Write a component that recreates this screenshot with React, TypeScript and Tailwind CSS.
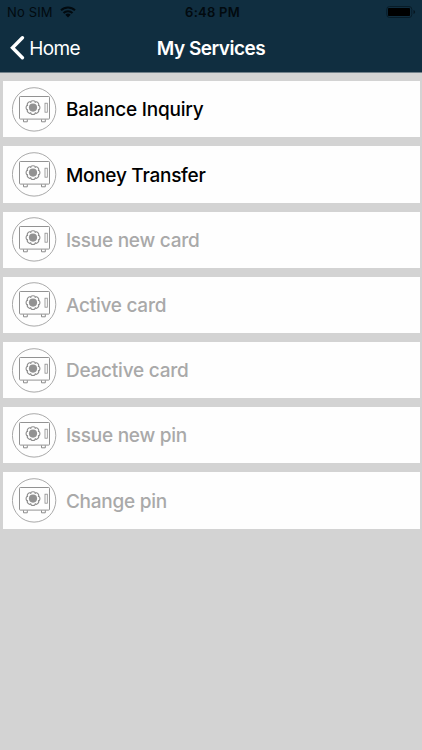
type Service = { label: string; enabled: boolean; spacing: string };

const services: Service[] = [
  { label: "Balance Inquiry", enabled: true, spacing: "tracking-[-0.2px]" },
  { label: "Money Transfer", enabled: true, spacing: "tracking-[-0.26px]" },
  { label: "Issue new card", enabled: false, spacing: "tracking-[-0.25px]" },
  { label: "Active card", enabled: false, spacing: "tracking-[-0.25px]" },
  { label: "Deactive card", enabled: false, spacing: "tracking-[-0.22px]" },
  { label: "Issue new pin", enabled: false, spacing: "tracking-[-0.25px]" },
  { label: "Change pin", enabled: false, spacing: "tracking-[-0.24px]" },
];

const petals = [0, 45, 90, 135, 180, 225, 270, 315];

function SafeIcon() {
  return (
    <svg className="h-[45px] w-[45px] shrink-0" viewBox="0 0 45 45" fill="none" stroke="#8c8c8c">
      <circle cx="22.1" cy="22.4" r="21.7" strokeWidth="0.75" />
      <rect x="7.5" y="9.5" width="30" height="22.6" rx="0.8" strokeWidth="0.95" />
      {petals.map((angle) => (
        <path
          key={angle}
          d="M18.8 15.6q-.2-1.9 2.2-1.9t2.2 1.9"
          transform={`rotate(${angle} 21 20.6)`}
          strokeWidth="1.1"
        />
      ))}
      <circle cx="21" cy="20.6" r="4.1" fill="#929292" stroke="none" />
      <rect x="33" y="16.2" width="2.3" height="9" strokeWidth="0.8" />
      <path d="M11.5 32.4v2.4h3.8v-2.4M29.5 32.4v2.4h3.8v-2.4" strokeWidth="1" />
    </svg>
  );
}

function Wifi() {
  return (
    <svg className="ml-[7px] h-[12px] w-[16px]" viewBox="0 0 16 12" fill="none" stroke="#020a0f" strokeWidth="2">
      <path d="M1 4.3a10 10 0 0 1 14 0M3.5 7a6.4 6.4 0 0 1 9 0" />
      <path d="M5.3 8.8a3.9 3.9 0 0 1 5.4 0L8 11.5z" fill="#020a0f" stroke="none" />
    </svg>
  );
}

function Battery() {
  return (
    <svg className="h-[12px] w-[30px]" viewBox="0 0 30 12">
      <rect x="0.8" y="0.5" width="25" height="11" rx="2.8" fill="none" stroke="#081c28" />
      <rect x="2" y="2" width="22" height="8" rx="0.8" fill="#000" />
      <path d="M27.5 4v4q1.6-.6 1.6-2t-1.6-2" fill="#07151e" />
    </svg>
  );
}

export default function App() {
  return (
    <div className="h-[750px] w-[422px] overflow-hidden bg-[#d3d3d3] font-['Inter',sans-serif]">
      <header className="h-[72.5px] border-b border-[#72818a] bg-[#102e40]">
        <div className="grid h-6 grid-cols-[1fr_auto_1fr] items-center text-[#020a0f]">
          <div className="flex items-center pl-[7px] text-[13px] leading-none">
            <span className="tracking-[0.15px]">No SIM</span>
            <Wifi />
          </div>
          <span className="pl-[3px] text-[13px] leading-none font-semibold tracking-[0.25px]">6:48 PM</span>
          <div className="flex justify-end pr-[6px]"><Battery /></div>
        </div>
        <div className="grid h-[47px] grid-cols-[1fr_auto_1fr] items-center pt-px text-white">
          <div className="flex items-center pl-[9.5px]">
            <svg className="h-[24px] w-[15px]" viewBox="0 0 15 24" fill="none" stroke="currentColor" strokeWidth="3.4" strokeLinecap="round" strokeLinejoin="miter">
              <path d="M12.4 1.8L2.5 11.8l9.9 10" />
            </svg>
            <span className="ml-[4.7px] text-[19px] leading-none tracking-[-0.6px]">Home</span>
          </div>
          <h1 className="text-[19px] leading-none font-semibold tracking-[-0.5px]">My Services</h1>
          <div />
        </div>
      </header>
      <main className="flex flex-col gap-[9px] pt-[8.8px] pr-[2.4px] pl-[2.5px]">
        {services.map((s) => (
          <div key={s.label} className="flex h-[56.2px] items-center bg-[#fefefe] pl-[9px]">
            <SafeIcon />
            <span className={`ml-[9.4px] pt-px text-[19px] leading-none font-medium whitespace-nowrap ${s.spacing} ${s.enabled ? "text-black" : "text-[#a9a9a9]"}`}>
              {s.label}
            </span>
          </div>
        ))}
      </main>
    </div>
  );
}
